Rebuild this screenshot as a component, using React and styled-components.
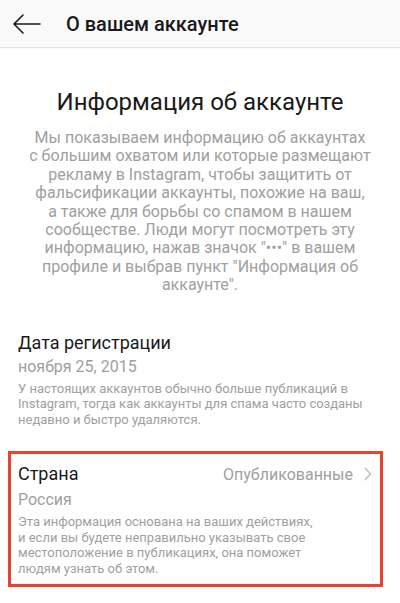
import React from "react";
import styled, { createGlobalStyle } from "styled-components";

const GlobalStyle = createGlobalStyle`
  html, body {
    margin: 0;
    padding: 0;
    background: #ffffff;
  }
  body {
    font-family: Roboto, "Noto Sans", "Liberation Sans", sans-serif;
    -webkit-font-smoothing: antialiased;
  }
`;

const Page = styled.div`
  width: 400px;
  min-height: 603px;
  background: #ffffff;
`;

const Header = styled.header`
  height: 47px;
  display: flex;
  align-items: center;
  background: #fafafa;
  border-bottom: 1px solid #e4e4e4;
  box-shadow: 0 1px 2px rgba(0, 0, 0, 0.04);
`;

const BackButton = styled.button`
  width: 66px;
  height: 47px;
  padding: 0 0 0 12px;
  border: 0;
  background: none;
  display: flex;
  align-items: center;
`;

const HeaderTitle = styled.h1`
  margin: 0;
  font-size: 20px;
  font-weight: 500;
  color: #1a1a1a;
`;

const Intro = styled.section`
  padding: 40px 16px 0;
  text-align: center;
`;

const Title = styled.h2`
  margin: 0;
  font-size: 24px;
  line-height: 28px;
  font-weight: 400;
  color: #1a1a1a;
`;

const Lead = styled.p`
  margin: 13px 0 0;
  font-size: 16px;
  line-height: 18.4px;
  color: #a0a0a0;
`;

const Field = styled.div`
  margin: ${(p) => p.$margin || "0"};
  padding: ${(p) => (p.$highlight ? "8px 8px 8px 7px" : "0 18px")};
  border: ${(p) => (p.$highlight ? "3px solid #e8432c" : "0")};
`;

const FieldHead = styled.div`
  display: flex;
  align-items: center;
  justify-content: space-between;
`;

const Label = styled.div`
  font-size: 18px;
  line-height: 24px;
  color: #1a1a1a;
`;

const Visibility = styled.div`
  display: flex;
  align-items: center;
  gap: 11px;
  font-size: 16px;
  color: #a0a0a0;
`;

const Value = styled.div`
  margin-top: ${(p) => p.$gap || "0"};
  font-size: 16px;
  line-height: 22px;
  color: #a0a0a0;
`;

const Note = styled.p`
  margin: ${(p) => p.$gap || "4px"} 0 0;
  font-size: 13px;
  line-height: ${(p) => p.$lh || "15.6px"};
  color: #a0a0a0;
`;

const ArrowLeft = () => (
  <svg width="30" height="20" viewBox="0 0 30 20" fill="none">
    <path
      d="M28 10H2M11 1L2 10l9 9"
      stroke="#1a1a1a"
      strokeWidth="1.6"
      strokeLinecap="round"
      strokeLinejoin="round"
    />
  </svg>
);

const Chevron = () => (
  <svg width="8" height="14" viewBox="0 0 8 14" fill="none">
    <path d="M1.5 1.5L6.5 7l-5 5.5" stroke="#c4c4c4" strokeWidth="1.8" strokeLinecap="round" strokeLinejoin="round" />
  </svg>
);

export default function App() {
  return (
    <Page>
      <GlobalStyle />
      <Header>
        <BackButton aria-label="Назад">
          <ArrowLeft />
        </BackButton>
        <HeaderTitle>О вашем аккаунте</HeaderTitle>
      </Header>

      <Intro>
        <Title>Информация об аккаунте</Title>
        <Lead>
          Мы показываем информацию об аккаунтах
          <br />с большим охватом или которые размещают
          <br />рекламу в Instagram, чтобы защитить от
          <br />фальсификации аккаунты, похожие на ваш,
          <br />а также для борьбы со спамом в нашем
          <br />сообществе. Люди могут посмотреть эту
          <br />информацию, нажав значок "•••" в вашем
          <br />профиле и выбрав пункт "Информация об
          <br />аккаунте".
        </Lead>
      </Intro>

      <Field $margin="36px 0 0">
        <Label>Дата регистрации</Label>
        <Value $gap="1px">ноября 25, 2015</Value>
        <Note $gap="3px">
          У настоящих аккаунтов обычно больше публикаций в
          <br />
          Instagram, тогда как аккаунты для спама часто созданы
          <br />
          недавно и быстро удаляются.
        </Note>
      </Field>

      <Field $highlight $margin="24px 17px 0 8px">
        <FieldHead>
          <Label>Страна</Label>
          <Visibility>
            Опубликованные
            <Chevron />
          </Visibility>
        </FieldHead>
        <Value $gap="3px">Россия</Value>
        <Note $gap="3px" $lh="15.5px">
          Эта информация основана на ваших действиях,
          <br />и если вы будете неправильно указывать свое
          <br />местоположение в публикациях, она поможет
          <br />людям узнать об этом.
        </Note>
      </Field>
    </Page>
  );
}
